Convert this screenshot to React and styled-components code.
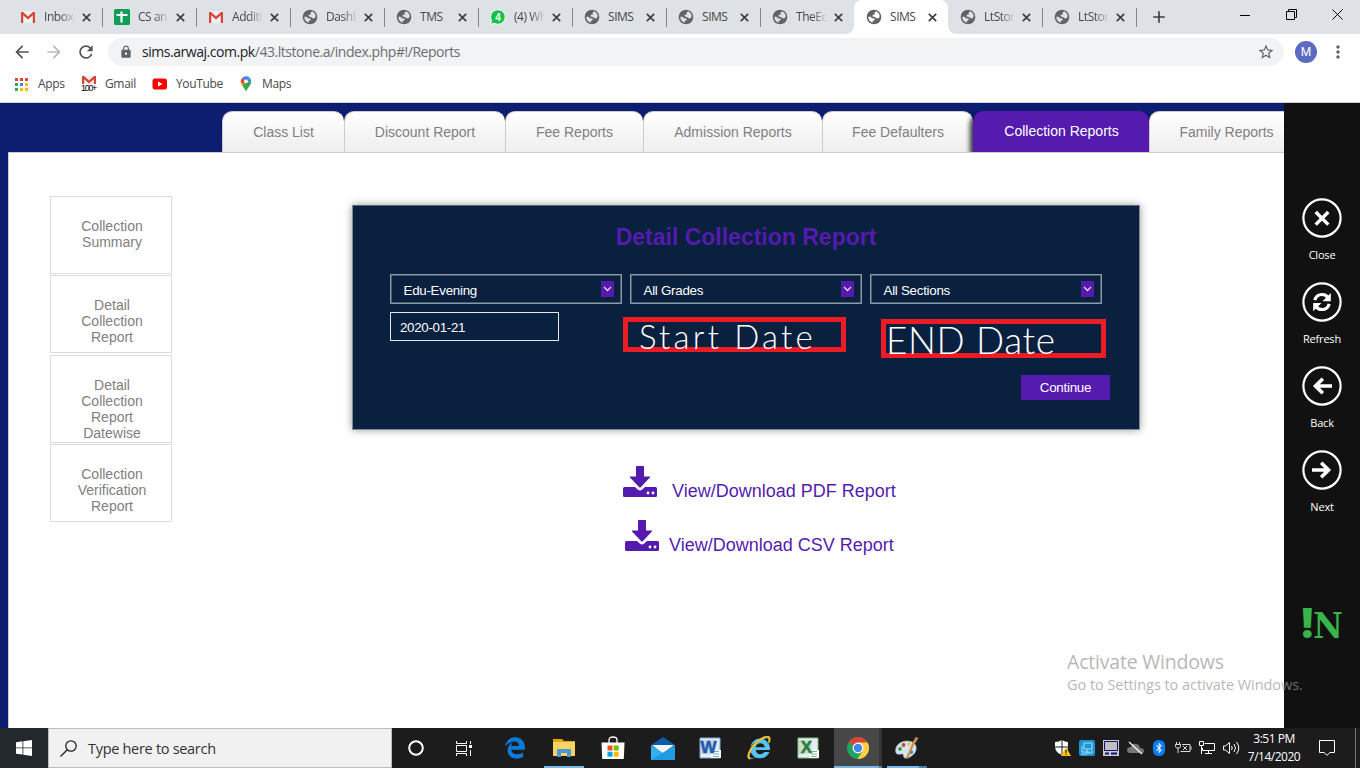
import React from "react";
import styled, { createGlobalStyle, css } from "styled-components";
import { FaEdgeLegacy, FaInternetExplorer, FaBluetoothB } from "react-icons/fa";
import { MdArrowBack, MdArrowForward, MdRefresh, MdLock, MdStarBorder, MdMoreVert, MdAdd } from "react-icons/md";

const ui = `"Open Sans", "Noto Sans", sans-serif`;
const arial = `"Liberation Sans", Arial, sans-serif`;
const violet = "#541bae";

const Global = createGlobalStyle`
  * { box-sizing: border-box; }
  html, body { margin: 0; padding: 0; overflow: hidden; background: #fff; }
  svg { display: block; flex: none; }
`;

const Screen = styled.div`
  position: relative;
  width: 1360px;
  height: 768px;
  display: flex;
  flex-direction: column;
  overflow: hidden;
  font-family: ${ui};
`;

/* ---------- browser chrome ---------- */
const TabStrip = styled.div`
  height: 34px;
  flex: none;
  display: flex;
  padding-left: 9px;
  background: #dee1e6;
`;
const BrowserTab = styled.div`
  position: relative;
  width: 94px;
  height: 34px;
  flex: none;
  display: flex;
  align-items: center;
  padding-left: 11px;
  ${(p) => p.$separator && css`
    &::after {
      content: "";
      position: absolute;
      right: 0;
      top: 8px;
      width: 1px;
      height: 19px;
      background: #80868b;
    }
  `}
  ${(p) => p.$active && css`
    background: #fff;
    border-radius: 8px 8px 0 0;
    left: -1px;
    padding-left: 12px;
    &::before, &::after {
      content: "";
      position: absolute;
      bottom: 0;
      width: 8px;
      height: 8px;
    }
    &::before {
      left: -8px;
      background: radial-gradient(circle at 0 0, transparent 7.5px, #fff 8px);
    }
    &::after {
      right: -8px;
      background: radial-gradient(circle at 100% 0, transparent 7.5px, #fff 8px);
    }
  `}
`;
const TabTitle = styled.span`
  width: 30px;
  margin-left: 8px;
  overflow: hidden;
  white-space: nowrap;
  font-size: 12px;
  letter-spacing: -0.45px;
  line-height: 18px;
  color: #45494d;
  ${(p) => p.$fade && css`
    mask-image: linear-gradient(90deg, #000 55%, transparent 105%);
  `}
`;
const TabClose = styled.span`
  margin-left: 8px;
  color: #3c4043;
`;
const NewTab = styled.div`
  display: flex;
  align-items: center;
  margin-left: 12px;
  color: #3c4043;
`;
const WindowButtons = styled.div`
  display: flex;
  margin-left: auto;
  height: 29px;
`;
const WindowButton = styled.div`
  width: 46px;
  display: flex;
  align-items: center;
  justify-content: center;
`;
const Toolbar = styled.div`
  height: 36px;
  flex: none;
  display: flex;
  align-items: center;
  padding-left: 12px;
  background: #fff;
  color: #5f6368;
`;
const NavButton = styled.span`
  width: 32px;
  flex: none;
  color: ${(p) => (p.$muted ? "#bababa" : "#505458")};
`;
const AddressBar = styled.div`
  width: 1176px;
  height: 28px;
  flex: none;
  display: flex;
  align-items: center;
  padding: 0 9px 0 11px;
  border-radius: 14px;
  background: #f1f3f4;
`;
const Url = styled.span`
  flex: 1;
  margin-left: 9px;
  font-size: 14px;
  letter-spacing: -0.46px;
  line-height: 18px;
  padding-bottom: 1px;
  color: #6a6e72;
  b { font-weight: 400; color: #202124; }
`;
const Avatar = styled.span`
  width: 22px;
  height: 22px;
  margin: 0 11px;
  border-radius: 50%;
  background: #5c6bc0;
  color: #fff;
  font: 12px/22px Roboto, sans-serif;
  text-align: center;
`;
const Bookmarks = styled.div`
  height: 33px;
  flex: none;
  display: flex;
  align-items: flex-start;
  padding: 4px 0 0 15px;
  background: #fff;
  border-bottom: 1px solid #d0d2d4;
`;
const Bookmark = styled.div`
  width: ${(p) => p.$w}px;
  height: 20px;
  display: flex;
  align-items: center;
  gap: ${(p) => p.$gap}px;
  font-size: 12px;
  letter-spacing: -0.35px;
  color: #45494d;
  span { line-height: 17px; padding-bottom: 2px; }
`;

/* ---------- page ---------- */
const Page = styled.div`
  height: 625px;
  flex: none;
  display: flex;
  background: #0d1d70;
`;
const Main = styled.div`
  width: 1284px;
  height: 625px;
  padding: 8px 0 0 8px;
  display: flex;
  flex-direction: column;
  overflow: hidden;
`;
const ReportTabs = styled.div`
  display: flex;
  height: 41px;
  flex: none;
  padding-left: 214px;
`;
const ReportTab = styled.div`
  width: ${(p) => p.$w}px;
  height: 41px;
  flex: none;
  border: 1px solid #ccc;
  border-width: 1px 0 0 1px;
  border-radius: 10px 10px 0 0;
  background: linear-gradient(#fff, #eee);
  color: #808080;
  font: 14px/41px ${arial};
  text-align: center;
  white-space: nowrap;
  ${(p) => p.$active && css`
    position: relative;
    border-color: ${violet};
    background: ${violet};
    color: #fff;
    line-height: 39px;
    box-shadow: -3px 3px 5px rgba(0, 0, 0, 0.8);
    clip-path: inset(0 0 0 -9px);
  `}
`;
const Content = styled.div`
  flex: 1;
  display: flex;
  background: #fff;
  border: 1px solid #ccc;
  border-width: 1px 0 0 1px;
  padding: 43px 0 0 41px;
`;
const SideMenu = styled.div`
  width: 122px;
  flex: none;
  display: flex;
  flex-direction: column;
`;
const SideItem = styled.div`
  height: ${(p) => p.$h}px;
  margin-bottom: ${(p) => p.$mb}px;
  padding: 21px 22px 0 24px;
  border: 1px solid #dcdcdc;
  color: #808080;
  font: 14px/16px ${arial};
  text-align: center;
`;
const Report = styled.div`
  width: 788px;
  margin: 9px 0 0 180px;
`;
const FormPanel = styled.div`
  position: relative;
  height: 225px;
  padding: 17px 30px 0 38px;
  background: #09203f;
  border: 1px solid #7d8a99;
  border-top-color: #5b6b7c;
  box-shadow: 0 0 8px rgba(0, 0, 0, 0.4);
`;
const Title = styled.h1`
  margin: 0 8px 0 0;
  height: 29px;
  font: bold 23px/28px ${arial};
  color: ${violet};
  text-align: center;
`;
const FieldRow = styled.div`
  display: flex;
  gap: 8px;
  margin-top: ${(p) => p.$top}px;
  margin-left: -1px;
`;
const SelectBox = styled.div`
  width: 232px;
  height: 30px;
  display: flex;
  align-items: center;
  justify-content: space-between;
  padding: 0 6px 0 12px;
  border: 1px solid #8b98a5;
  box-shadow: inset 0 0 0 1px #4a5c70;
  color: #fff;
  font: 13.33px ${arial};
  letter-spacing: -0.26px;
  > span:first-child { padding: 2px 0 0 0.5px; }
`;
const SelectArrow = styled.span`
  width: 13px;
  height: 16px;
  margin-right: 1px;
  display: flex;
  align-items: center;
  justify-content: center;
  background: ${violet};
`;
const DateInput = styled.div`
  width: 169px;
  height: 29px;
  padding-left: 9px;
  border: 1px solid #e6e9ec;
  color: #fff;
  font: 13.33px/29px ${arial};
  letter-spacing: -0.3px;
`;
const InkBox = styled.div`
  position: absolute;
  left: ${(p) => p.$x}px;
  top: ${(p) => p.$y}px;
  width: ${(p) => p.$w}px;
  height: ${(p) => p.$h}px;
  border: 5px solid #ed1c24;
  color: #fff;
  font: 300 ${(p) => p.$size}px/${(p) => p.$line}px Lato, sans-serif;
  white-space: nowrap;
  letter-spacing: ${(p) => p.$tracking}px;
  padding-left: ${(p) => p.$pad}px;
`;
const Continue = styled.div`
  width: 89px;
  height: 25px;
  margin: 34px -1px 0 auto;
  background: ${violet};
  color: #fff;
  font: 13.33px/25px ${arial};
  letter-spacing: -0.25px;
  text-align: center;
`;
const Downloads = styled.div`
  display: flex;
  flex-direction: column;
  gap: 23px;
  margin-top: 36px;
`;
const DownloadLink = styled.div`
  height: 31px;
  display: flex;
  gap: ${(p) => p.$gap}px;
  padding-left: ${(p) => p.$pad}px;
  color: ${violet};
  font: 18px/20px ${arial};
  span { padding-top: 15px; white-space: nowrap; }
`;
const SideBar = styled.div`
  width: 76px;
  background: #111;
  padding-top: 95px;
  display: flex;
  flex-direction: column;
  align-items: center;
`;
const SideAction = styled.div`
  height: 84px;
  flex: none;
  display: flex;
  flex-direction: column;
  align-items: center;
  gap: 9px;
  color: #fff;
  font-size: 11px;
  line-height: 15px;
  letter-spacing: -0.2px;
`;
const Brand = styled.div`
  display: flex;
  align-items: baseline;
  height: 44px;
  margin-top: 66px;
  color: #39b44a;
  font: bold 36px/44px "DejaVu Serif Condensed", "DejaVu Serif", serif;
  span {
    width: 12px;
    font: 800 42px/44px "Open Sans", sans-serif;
  }
`;
const Watermark = styled.div`
  position: absolute;
  left: 1067px;
  top: 648px;
  color: rgba(150, 150, 150, 0.7);
  white-space: nowrap;
  div:first-child { font-size: 19.5px; line-height: 27px; letter-spacing: -0.2px; }
  div:last-child { font-size: 14.5px; line-height: 19px; letter-spacing: -0.05px; }
`;

/* ---------- taskbar ---------- */
const Taskbar = styled.div`
  height: 40px;
  flex: none;
  display: flex;
  background: #1c1c1c;
`;
const Start = styled.div`
  width: 48px;
  display: flex;
  align-items: center;
  justify-content: center;
  background: #22282b;
`;
const Search = styled.div`
  width: 344px;
  display: flex;
  align-items: center;
  gap: 11px;
  padding-left: 11px;
  background: #f1f1f1;
  border: 1px solid #bdbdbd;
  color: #333;
  font-size: 14.5px;
  letter-spacing: -0.3px;
`;
const TaskButton = styled.div`
  width: ${(p) => p.$w || 48}px;
  margin-right: ${(p) => p.$mr || 0}px;
  padding-left: ${(p) => p.$pl || 0}px;
  height: 40px;
  display: flex;
  align-items: center;
  justify-content: center;
  background: ${(p) => (p.$active ? "#474747" : "transparent")};
  box-shadow: ${(p) => (p.$open ? "inset 0 -2px #76b9ed" : "none")};
`;
const StackEdge = styled.div`
  width: ${(p) => p.$w}px;
  margin-right: ${(p) => p.$mr || 0}px;
  height: 40px;
  background: ${(p) => (p.$active ? "#333" : "transparent")};
  border-bottom: 2px solid #4f7ea6;
`;
const Tray = styled.div`
  margin-left: auto;
  display: flex;
  align-items: center;
`;
const TrayIcon = styled.div`
  width: 24px;
  display: flex;
  justify-content: center;
`;
const Clock = styled.div`
  width: 62px;
  margin-right: 2px;
  color: #fff;
  font-size: 12px;
  line-height: 18px;
  letter-spacing: -0.5px;
  text-align: center;
  white-space: nowrap;
`;
const Notify = styled.div`
  width: 40px;
  display: flex;
  justify-content: center;
`;
const ShowDesktop = styled.div`
  width: 5px;
  height: 40px;
  margin-left: 8px;
  border-left: 1px solid #777;
`;

/* ---------- drawings ---------- */
const CloseMark = () => (
  <svg width="9" height="9" stroke="currentColor" strokeWidth="1.700"><path d="m.8.8 7.400 7.400m0-7.400L.8 8.200" /></svg>
);
const Globe = ({ bg = "#dee1e6" }) => (
  <svg width="16" height="16" viewBox="0 0 16 16">
    <circle cx="8" cy="8" r="7.3" fill="#5f6368" />
    <path d="M10 2.300Q13.700 4 13.700 7.500L12.700 9.200 9.800 9.300 9.300 8 6.500 7.600 6.800 5.800 9.300 5.300 8.300 4Z" fill={bg} />
    <path d="M2.200 7.800 4.500 7.700 6 9.200 8.500 9.600 8.600 11.200 6.800 12 6.500 13.700Q2.600 12.200 2.200 7.800Z" fill={bg} />
  </svg>
);
const GmailIcon = ({ count }) => (
  <svg width="16" height="16" viewBox="0 0 16 16" overflow="visible">
    <rect x="1" y={count ? 0 : 2} width="14" height="12" rx="1" fill="#efefef" />
    <path transform={count ? "translate(0 -3)" : undefined} d="M1 14V3h2l5 4.600L13 3h2v11h-2.200V6.300L8 10.500 3.200 6.300V14Z" fill="#d64537" />
    {count && (
      <g>
        <rect x="-1" y="8" width="18" height="8" fill="#fff" />
        <text x="8" y="15" fontFamily="Liberation Sans" fontSize="9" fill="#000" textAnchor="middle" textLength="16">100+</text>
      </g>
    )}
  </svg>
);
const SheetIcon = () => (
  <svg width="16" height="16"><rect width="16" height="16" rx="1.500" fill="#0f9d58" /><path d="M2.500 6h11M7.500 2.500v11" stroke="#fff" strokeWidth="2.200" /></svg>
);
const ChatIcon = () => (
  <svg width="16" height="16">
    <path d="M8 .7a7.300 7.300 0 1 1-3.700 13.600L.5 15.300l1.100-3.700A7.300 7.300 0 0 1 8 .7Z" fill="#11c443" stroke="#fff" />
    <text x="8" y="11.500" fontFamily="Liberation Sans" fontWeight="bold" fontSize="10" fill="#fff" textAnchor="middle">4</text>
  </svg>
);
const AppsIcon = () => {
  const fills = ["#ea4335", "#ea4335", "#ea4335", "#34a853", "#4285f4", "#fbbc05", "#34a853", "#fbbc05", "#fbbc05"];
  return (
    <svg width="13" height="13">
      {fills.map((f, i) => <rect key={i} x={(i % 3) * 5} y={Math.floor(i / 3) * 5} width="3" height="3" fill={f} />)}
    </svg>
  );
};
const YouTubeIcon = () => (
  <svg width="16" height="16"><rect x="0.500" y="2.500" width="14.500" height="11" rx="2.500" fill="#f00" /><path d="m6 5.500 4.500 2.500L6 10.500Z" fill="#fff" /></svg>
);
const MapsIcon = () => (
  <svg width="16" height="16">
    <path d="M8 16C7.500 12.500 2.800 10 2.800 5.300h10.400C13.200 10 8.500 12.500 8 16Z" fill="#34a853" />
    <path d="M2.800 5.300 8 5.300l-3.600 4.900C3.300 8.700 2.800 7 2.800 5.300Z" fill="#fbbc04" />
    <path d="M8 .2a5.200 5.200 0 0 0-4 1.800L8 5.300l3.800-3.700A5.200 5.200 0 0 0 8 .2Z" fill="#4285f4" />
    <path d="M4 2a5.200 5.200 0 0 0-1.200 3.800L5 8l3-2.700Z" fill="#ea4335" />
    <path d="M11.800 1.700a5.200 5.200 0 0 1 1.400 3.800L8 5.300Z" fill="#4285f4" />
    <circle cx="8" cy="5.300" r="1.900" fill="#fff" />
  </svg>
);
const DownloadIcon = () => (
  <svg width="34" height="31" viewBox="0 0 34 31" fill={violet}>
    <path d="M13 .7q0-.7.7-.7h6.600q.7 0 .7.700V10.500h5.500q1.200 0 .4 1L18 21q-1 1.100-2 0L7 11.500q-.7-1 .4-1H13Z" />
    <path d="M1.500 21H12l3 2.700q2 1.500 4 0L22 21h10.500q1.500 0 1.500 1.500v7q0 1.500-1.500 1.500h-31Q0 31 0 29.500v-7Q0 21 1.500 21Z" />
    <circle cx="25" cy="27" r="1.400" fill="#fff" /><circle cx="30" cy="27" r="1.400" fill="#fff" />
  </svg>
);
const RoundIcon = ({ children }) => (
  <svg width="40" height="40" viewBox="0 0 40 40" fill="none" stroke="#fff">
    <circle cx="20" cy="20" r="18.600" strokeWidth="2.200" />
    {children}
  </svg>
);
const actions = [
  ["Close", <path key="c" d="m13.700 14 12.600 12.600m0-12.600L13.700 26.600" strokeWidth="3.400" />],
  ["Refresh", (
    <g key="r">
      <path d="M12.800 18.200q1.500-5.700 7.200-5.700 4.500 0 6 3.500M27.200 21.800q-1.500 5.700-7.200 5.700-4.500 0-6-3.500" strokeWidth="3.200" />
      <path d="M28.800 11v8.300h-8.300ZM11.200 29.200v-8.300h8.300Z" fill="#fff" stroke="none" />
    </g>
  )],
  ["Back", <path key="b" d="M30 20H14M20.800 12.800 13.500 20l7.300 7.200" strokeWidth="3.600" />],
  ["Next", <path key="n" d="M10 20h16M19.200 12.800 26.500 20l-7.300 7.200" strokeWidth="3.600" />],
];
const OfficeIcon = ({ letter, color, tint }) => (
  <svg width="22" height="22">
    <path d="M1 1h20v20H1Z" fill="#e6edf5" stroke={tint} />
    <rect x="1.500" y="3" width="13" height="14" fill={tint} opacity=".3" />
    <path d="M12 13h10v8H12Z" fill="#fff" />
    <path d="M14 14.500h6M14 17h6M14 19.500h6" stroke={tint} />
    <text x="9.500" y="16" fontFamily="Liberation Sans" fontWeight="bold" fontSize="17" fill={color} stroke={color} strokeWidth=".5" textAnchor="middle">{letter}</text>
  </svg>
);
const ExplorerIcon = () => (
  <svg width="24" height="24" viewBox="0 0 24 24">
    <FaInternetExplorer x="1" y="1" size={22} color="#55c4ef" />
    <path d="M3.500 22.500Q-1 22 3.500 14 8 6 16 2q6-3 6.500.500.200 2-.800 4" fill="none" stroke="#f0bd27" strokeWidth="2" />
  </svg>
);
const FolderIcon = () => (
  <svg width="22" height="20">
    <path d="M0 1h9l2 2h11v15H0Z" fill="#e5a50f" /><rect y="4" width="22" height="14" fill="#fcd462" />
    <path d="M4 19v-7q0-1 1-1h12q1 0 1 1v7h-4v-4H8v4Z" fill="#4a98d8" />
  </svg>
);
const StoreIcon = () => (
  <svg width="24" height="24" viewBox="0 0 24 24">
    <path d="M8 7V4q0-3 4-3t4 3v3" fill="none" stroke="#fff" strokeWidth="1.300" />
    <path d="M.5 6.500h23L22.800 23H1.200Z" fill="#fff" />
    <path d="M6.500 9.500h5v5h-5Z" fill="#f25022" /><path d="M12.700 9.500h5v5h-5Z" fill="#7fba00" />
    <path d="M6.500 15.700h5v5h-5Z" fill="#00a4ef" /><path d="M12.700 15.700h5v5h-5Z" fill="#ffb900" />
  </svg>
);
const MailIcon = () => (
  <svg width="24" height="23">
    <path d="M0 8 12 0l12 8Z" fill="#0d5cab" /><path d="M1 8h22L12 17Z" fill="#f3f3f3" />
    <path d="M0 8v15h24V8L12 16Z" fill="#30b0ee" /><path d="m0 23 24-15v15Z" fill="#1b93e0" opacity=".7" />
  </svg>
);
const ChromeIcon = () => (
  <svg width="22" height="22" viewBox="0 0 22 22">
    <circle cx="11" cy="11" r="11" fill="#1da462" />
    <path d="M11 11 1.500 5.500a11 11 0 0 1 19 0Z" fill="#db4437" />
    <path d="M11 5.500h9.500A11 11 0 0 1 10.500 22l5-8Z" fill="#ffcd40" />
    <circle cx="11" cy="11" r="5.400" fill="#fff" /><circle cx="11" cy="11" r="4.200" fill="#4285f4" />
  </svg>
);
const PaintIcon = () => (
  <svg width="26" height="24">
    <path d="M2 17C0 10 6 5 13 5s10 4 9 9-8 9-11 8 0-4-3-4-4 1-6-1Z" fill="#d3e6f2" stroke="#8fb2c8" strokeWidth=".7" />
    <circle cx="6" cy="13" r="1.900" fill="#2e9e3a" /><circle cx="9.500" cy="9" r="1.900" fill="#e03c2d" />
    <circle cx="15" cy="8" r="1.700" fill="#f3c32c" /><circle cx="17" cy="16" r="2" fill="#2b7cd3" />
    <path d="m13 22 7.500-17" stroke="#d98c3a" strokeWidth="2.200" /><path d="m19 6 2.500-5 3 1-3 5Z" fill="#b98d5e" />
  </svg>
);

const browserTabs = [
  { title: "Inbox", icon: <GmailIcon />, fade: true },
  { title: "CS an", icon: <SheetIcon />, fade: true },
  { title: "Additi", icon: <GmailIcon />, fade: true },
  { title: "Dashb", icon: <Globe />, fade: true },
  { title: "TMS", icon: <Globe /> },
  { title: "(4) Wh", icon: <ChatIcon />, fade: true },
  { title: "SIMS", icon: <Globe /> },
  { title: "SIMS", icon: <Globe /> },
  { title: "TheEc", icon: <Globe />, fade: true, plain: true },
  { title: "SIMS", icon: <Globe bg="#fff" />, active: true },
  { title: "LtStor", icon: <Globe />, fade: true },
  { title: "LtStor", icon: <Globe />, fade: true },
];
const reportTabs = [
  ["Class List", 122], ["Discount Report", 161], ["Fee Reports", 138], ["Admission Reports", 179],
  ["Fee Defaulters", 151], ["Collection Reports", 176], ["Family Reports", 154],
];
const sideItems = [
  ["Collection Summary", 78, 1], ["Detail Collection Report", 78, 2],
  ["Detail Collection Report Datewise", 88, 1], ["Collection Verification Report", 78, 0],
];

export default function App() {
  return (
    <Screen>
      <Global />
      <TabStrip>
        {browserTabs.map((t, i) => (
          <BrowserTab key={i} $active={t.active} $separator={!t.active && !t.plain}>
            {t.icon}
            <TabTitle $fade={t.fade}>{t.title}</TabTitle>
            <TabClose><CloseMark /></TabClose>
          </BrowserTab>
        ))}
        <NewTab><MdAdd size={20} /></NewTab>
        <WindowButtons>
          <WindowButton><svg width="10" height="10"><path d="M0 5.500h10" stroke="#000" /></svg></WindowButton>
          <WindowButton><svg width="11" height="11" fill="none" stroke="#000"><path d="M.5 2.500h8v8h-8ZM2.500 2.500v-2h8v8h-2" /></svg></WindowButton>
          <WindowButton><svg width="11" height="11" stroke="#000"><path d="m.5.500 10 10m0-10-10 10" /></svg></WindowButton>
        </WindowButtons>
      </TabStrip>
      <Toolbar>
        <NavButton><MdArrowBack size={20} /></NavButton>
        <NavButton $muted><MdArrowForward size={20} /></NavButton>
        <NavButton><MdRefresh size={20} /></NavButton>
        <AddressBar>
          <MdLock size={14} />
          <Url><b>sims.arwaj.com.pk</b>/43.ltstone.a/index.php#!/Reports</Url>
          <MdStarBorder size={18} />
        </AddressBar>
        <Avatar>M</Avatar>
        <MdMoreVert size={20} />
      </Toolbar>
      <Bookmarks>
        <Bookmark $w={66} $gap={10}><AppsIcon /><span>Apps</span></Bookmark>
        <Bookmark $w={71} $gap={8}><GmailIcon count /><span>Gmail</span></Bookmark>
        <Bookmark $w={86} $gap={8}><YouTubeIcon /><span>YouTube</span></Bookmark>
        <Bookmark $w={66} $gap={8}><MapsIcon /><span>Maps</span></Bookmark>
      </Bookmarks>
      <Page>
        <Main>
          <ReportTabs>
            {reportTabs.map(([name, w]) => (
              <ReportTab key={name} $w={w} $active={name === "Collection Reports"}>{name}</ReportTab>
            ))}
          </ReportTabs>
          <Content>
            <SideMenu>
              {sideItems.map(([name, h, mb]) => <SideItem key={name} $h={h} $mb={mb}>{name}</SideItem>)}
            </SideMenu>
            <Report>
              <FormPanel>
                <Title>Detail Collection Report</Title>
                <FieldRow $top={22}>
                  {["Edu-Evening", "All Grades", "All Sections"].map((s) => (
                    <SelectBox key={s}><span>{s}</span>
                      <SelectArrow><svg width="9" height="6" fill="none" stroke="#ddd" strokeWidth="1.300"><path d="m1 1 3.500 3.500L8 1" /></svg></SelectArrow>
                    </SelectBox>
                  ))}
                </FieldRow>
                <FieldRow $top={8}><DateInput>2020-01-21</DateInput></FieldRow>
                <InkBox $x={270} $y={111} $w={223} $h={35} $size={33} $line={28} $tracking={3.2} $pad={11}>Start Date</InkBox>
                <InkBox $x={528} $y={113} $w={225} $h={39} $size={37} $line={31} $tracking={0.6} $pad={0}>END Date</InkBox>
                <Continue>Continue</Continue>
              </FormPanel>
              <Downloads>
                <DownloadLink $pad={271} $gap={15}><DownloadIcon /><span>View/Download PDF Report</span></DownloadLink>
                <DownloadLink $pad={273} $gap={10}><DownloadIcon /><span>View/Download CSV Report</span></DownloadLink>
              </Downloads>
            </Report>
          </Content>
        </Main>
        <SideBar>
          {actions.map(([name, mark]) => <SideAction key={name}><RoundIcon>{mark}</RoundIcon>{name}</SideAction>)}
          <Brand><span>!</span>N</Brand>
        </SideBar>
      </Page>
      <Taskbar>
        <Start><svg width="16" height="16" fill="#fff"><path d="M0 2.200 6.500 1.300v6.200H0ZM7.300 1.200 16 0v7.500H7.300ZM0 8.300h6.500v6.300L0 13.700ZM7.300 8.300H16V16l-8.700-1.300Z" /></svg></Start>
        <Search>
          <svg width="17" height="17" fill="none" stroke="#222" strokeWidth="1.300"><circle cx="11" cy="6" r="5.200" /><path d="M7.300 9.700.5 16.500" /></svg>
          Type here to search
        </Search>
        <TaskButton><svg width="16" height="16"><circle cx="8" cy="8" r="6.800" fill="none" stroke="#fff" strokeWidth="2" /></svg></TaskButton>
        <TaskButton><svg width="17" height="15" fill="none" stroke="#fff"><path d="M.5 0v2.500h10V0M.5 4.500h10v6H.5ZM.5 15v-2.500h10V15M14.500 0v3M14.500 9v6" /><path d="M13 4h3v3h-3Z" fill="#fff" stroke="none" /></svg></TaskButton>
        <TaskButton $w={54} $mr={2}><FaEdgeLegacy size={22} color="#0a7bd8" /></TaskButton>
        <TaskButton $w={40} $mr={4} $open><FolderIcon /></TaskButton>
        <TaskButton $w={49}><StoreIcon /></TaskButton>
        <TaskButton $w={49} $pl={2}><MailIcon /></TaskButton>
        <TaskButton $w={48}><OfficeIcon letter="W" color="#1f5aa8" tint="#7fa6d8" /></TaskButton>
        <TaskButton $w={50}><ExplorerIcon /></TaskButton>
        <TaskButton $w={48} $mr={2}><OfficeIcon letter="X" color="#2a7d3b" tint="#7dba78" /></TaskButton>
        <TaskButton $w={45} $pl={2} $active $open><ChromeIcon /></TaskButton>
        <StackEdge $w={3} $mr={5} $active />
        <TaskButton $w={32} $pl={7} $open><PaintIcon /></TaskButton>
        <StackEdge $w={8} />
        <Tray>
          <TrayIcon><svg width="17" height="17"><path d="M7 0q3 2 6 2v5q0 5-6 8Q0 12 0 7V2q4 0 7-2Z" fill="#fff" /><path d="M7 0v15M0 7h13" stroke="#1c1c1c" /><path d="m11 7 5 9H6Z" fill="#fcc419" /><path d="M11 10v3m0 1v1" stroke="#000" /></svg></TrayIcon>
          <TrayIcon><svg width="16" height="16"><rect width="16" height="16" rx="2" fill="#1d94d2" /><path d="M5 3h8v6H5ZM3 6v6h8M8 9v4h5v-3M2 14h6" fill="none" stroke="#a9e0fa" /></svg></TrayIcon>
          <TrayIcon><svg width="16" height="16"><rect width="16" height="16" fill="#c9c9cf" /><path d="M1.500 1.500h13v9h-13Z" fill="#c0c0c0" stroke="#10107a" /><path d="M2 13.500h4M8 13.500h6" stroke="#10107a" strokeWidth="2" /></svg></TrayIcon>
          <TrayIcon><svg width="17" height="14"><path d="M3 12Q0 12 0 9t4-3q1-4 5-3 3 0 4 4 4 0 4 3t-3 2Z" fill="#777" /><path d="m2 1 13 12" stroke="#fff" strokeWidth="1.200" /></svg></TrayIcon>
          <TrayIcon><svg width="12" height="16"><rect width="12" height="16" rx="5.500" fill="#0a7cf5" /><FaBluetoothB x="0.500" y="2.500" size={11} color="#fff" /></svg></TrayIcon>
          <TrayIcon><svg width="17" height="13" fill="none" stroke="#ddd"><path d="M1.500 0v2M4.500 0v2M.5 2.500h5v2l-1 1.500h-3L.5 4.500ZM3 6v5M7 2.500h8v7H5.500M16 4.500v3M8 4l4 4m0-4L8 8" /></svg></TrayIcon>
          <TrayIcon><svg width="17" height="14" fill="none" stroke="#fff"><path d="M5.500 2.500h10v7h-12V7M.5.500h4v4h-4ZM2.500 5v8M9.500 10v3M6 12.500h7" /></svg></TrayIcon>
          <TrayIcon><svg width="17" height="14" fill="none" stroke="#fff"><path d="M.5 5v4h2l4 3.500v-11L2.500 5ZM8.500 5q1.500 2 0 4M11 3q3 4 0 8M13.500 1q4.500 6 0 12" /></svg></TrayIcon>
          <Clock>3:51 PM<br />7/14/2020</Clock>
          <Notify><svg width="17" height="16" fill="none" stroke="#fff"><path d="M.5.500h15v12H11L8 15.300 5 12.500H.5Z" /></svg></Notify>
          <ShowDesktop />
        </Tray>
      </Taskbar>
      <Watermark><div>Activate Windows</div><div>Go to Settings to activate Windows.</div></Watermark>
    </Screen>
  );
}
